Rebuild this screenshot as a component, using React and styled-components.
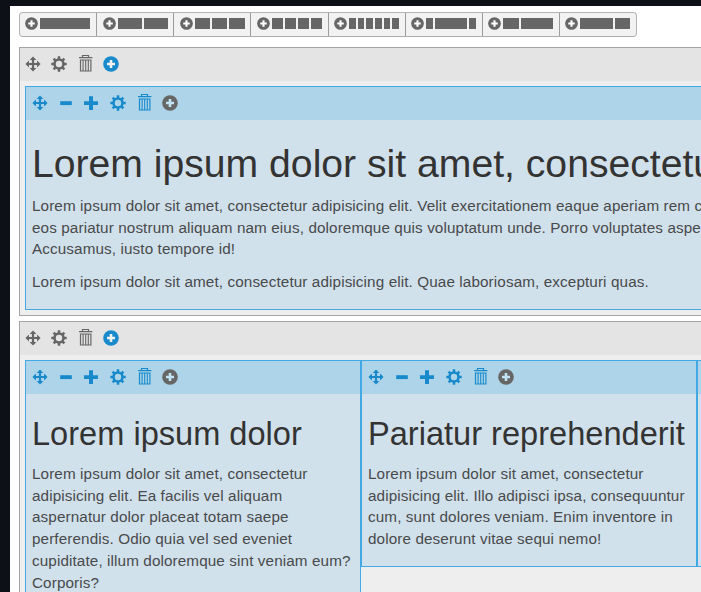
import React from "react";
import styled, { createGlobalStyle } from "styled-components";

const Global = createGlobalStyle`
  * { box-sizing: border-box; }
  html, body { margin: 0; background: #0d1017; }
  body { overflow: hidden; font-family: "Liberation Sans", Arial, sans-serif; color: #484a4c; }
`;

const Frame = styled.div`
  height: 592px;
  overflow: hidden;
  padding: 6px 0 0 10px;
`;

const Page = styled.main`
  height: 586px;
  padding: 6px 0 0 9px;
  background: #fff;
  overflow: hidden;
`;

const Toolbar = styled.div`
  display: flex;
  width: 618px;
  height: 25px;
  margin-bottom: 10px;
  border: 1px solid #b4b4b4;
  border-bottom-color: #adadad;
  border-radius: 4px;
  background: #f2f2f2;
  overflow: hidden;
`;

const LayoutButton = styled.button`
  display: flex;
  align-items: flex-start;
  flex: 1 1 0;
  min-width: 0;
  margin: 0;
  padding: 4px 5px 0 5.4px;
  border: 0;
  border-right: 1px solid #9d9d9d;
  background: transparent;
  &:last-child { border-right: 0; }
`;

const Bars = styled.span`
  display: grid;
  grid-template-columns: ${(p) => p.$columns};
  gap: 2px;
  width: 50px;
  height: 11px;
  margin: 1px 0 0 2px;
`;

const Bar = styled.span`
  background: #666;
`;

const Row = styled.section`
  width: 760px;
  height: ${(p) => p.$height}px;
  margin-bottom: 5px;
  border: 1px solid #a3a3a3;
  background: #eee;
`;

const RowTools = styled.div`
  display: flex;
  align-items: center;
  height: 33px;
  padding: 0 0 2px 5px;
  background: #e4e4e4;
  color: #666;
`;

const Columns = styled.div`
  display: flex;
  align-items: flex-start;
  padding: 5px 0 0 5px;
`;

const Column = styled.article`
  flex: none;
  width: ${(p) => p.$width}px;
  height: ${(p) => p.$height}px;
  border: 1px solid #42a9e4;
  background: #d1e1eb;
  white-space: nowrap;
`;

const ColumnTools = styled.div`
  display: flex;
  align-items: center;
  height: 33px;
  padding: 0 0 2px 5.6px;
  background: #aed4e9;
  color: #188acb;
`;

const Slot = styled.span`
  display: flex;
  flex: none;
  width: ${(p) => p.$width}px;
  color: ${(p) => p.$color || "inherit"};
`;

const Content = styled.div`
  padding: ${(p) => p.$top}px 0 0 6px;
`;

const Title = styled.h1`
  margin: 0 0 ${(p) => p.$gap}px;
  font-size: ${(p) => p.$size}px;
  line-height: 43px;
  font-weight: 400;
  color: #333;
`;

const Text = styled.p`
  margin: 0 0 10.9px;
  font-size: 15.25px;
  letter-spacing: 0.11px;
  line-height: 21.7px;
`;

const Line = styled.span`
  display: block;
  width: max-content;
`;

const Icon = ({ size = 16, children }) => (
  <svg width={size} height={size} viewBox="0 0 16 16" fill="currentColor" overflow="visible">{children}</svg>
);

const Move = () => (
  <Icon>
    <path d="M8 .4 11.4 4H9.1v2.9H12V4.6L15.6 8 12 11.4V9.1H9.1V12h2.3L8 15.6 4.6 12h2.3V9.1H4v2.3L.4 8 4 4.6v2.3h2.9V4H4.6Z" />
  </Icon>
);
const Gear = () => (
  <Icon>
    <g fill="none" stroke="currentColor">
      <circle cx="8" cy="8" r="4.5" strokeWidth="2.6" />
      <path strokeWidth="2.5" d="M8 .3v3M8 12.7v3M.3 8h3M12.7 8h3M2.6 2.6l2 2M11.4 11.4l2 2M2.6 13.4l2-2M11.4 4.6l2-2" />
    </g>
  </Icon>
);
const Trash = () => (
  <Icon>
    <g fill="none" stroke="currentColor">
      <path strokeWidth="1.2" d="M1 1.6h13.4M4.5 1.5V-.5h6v2" />
      <path strokeWidth="1.2" d="M2.5 4h10.4v11H2.5Z" />
      <path strokeWidth="1.1" d="M5.1 4v11M7.7 4v11M10.3 4v11" />
    </g>
  </Icon>
);
const Minus = () => <Icon><path d="M2.2 6.2h11.6v3.9H2.2Z" /></Icon>;
const Plus = () => <Icon><path d="M6 1.2h4v5h5v3.8h-5v5H6v-5H1V6.2h5Z" /></Icon>;
const CirclePlus = ({ size = 16, hole }) => (
  <Icon size={size}>
    <circle cx="8" cy="8" r="7.8" />
    <path fill={hole} d="M6.7 4h2.6v2.7H12v2.6H9.3V12H6.7V9.3H4V6.7h2.7Z" />
  </Icon>
);

const layouts = [
  { columns: "1fr", count: 1 },
  { columns: "1fr 1fr", count: 2 },
  { columns: "repeat(3, 1fr)", count: 3 },
  { columns: "repeat(4, 1fr)", count: 4 },
  { columns: "repeat(6, 1fr)", count: 6 },
  { columns: "6.6px 1fr 6.6px", count: 3 },
  { columns: "15.4px 1fr", count: 2 },
  { columns: "1fr 15.4px", count: 2 },
];

const RowHeader = () => (
  <RowTools>
    <Slot $width={26}><Move /></Slot>
    <Slot $width={27}><Gear /></Slot>
    <Slot $width={25}><Trash /></Slot>
    <Slot $width={16} $color="#188acb"><CirclePlus hole="#f2f2f2" /></Slot>
  </RowTools>
);

const ColumnHeader = () => (
  <ColumnTools>
    <Slot $width={26}><Move /></Slot>
    <Slot $width={25}><Minus /></Slot>
    <Slot $width={27}><Plus /></Slot>
    <Slot $width={27}><Gear /></Slot>
    <Slot $width={25}><Trash /></Slot>
    <Slot $width={16} $color="#666"><CirclePlus hole="#c1e3f3" /></Slot>
  </ColumnTools>
);

const Paragraph = ({ lines }) => (
  <Text>{lines.map((line) => <Line key={line}>{line}</Line>)}</Text>
);

export default function App() {
  return (
    <>
      <Global />
      <Frame>
        <Page>
          <Toolbar>
            {layouts.map(({ columns, count }) => (
              <LayoutButton key={columns} aria-label="Add row">
                <Slot $width={13} $color="#666"><CirclePlus size={13} hole="#fff" /></Slot>
                <Bars $columns={columns}>
                  {Array.from({ length: count }, (_, n) => <Bar key={n} />)}
                </Bars>
              </LayoutButton>
            ))}
          </Toolbar>
          <Row $height={269}>
            <RowHeader />
            <Columns>
              <Column $width={1008} $height={224}>
                <ColumnHeader />
                <Content $top={22}>
                  <Title $size={39.15} $gap={10}>Lorem ipsum dolor sit amet, consectetur</Title>
                  <Paragraph lines={[
                    "Lorem ipsum dolor sit amet, consectetur adipisicing elit. Velit exercitationem eaque aperiam rem corporis",
                    "eos pariatur nostrum aliquam nam eius, doloremque quis voluptatum unde. Porro voluptates aspernatur",
                    "Accusamus, iusto tempore id!",
                  ]} />
                  <Paragraph lines={["Lorem ipsum dolor sit amet, consectetur adipisicing elit. Quae laboriosam, excepturi quas."]} />
                </Content>
              </Column>
            </Columns>
          </Row>
          <Row $height={400}>
            <RowHeader />
            <Columns>
              <Column $width={336} $height={260}>
                <ColumnHeader />
                <Content $top={18}>
                  <Title $size={32.6} $gap={8}>Lorem ipsum dolor</Title>
                  <Paragraph lines={[
                    "Lorem ipsum dolor sit amet, consectetur",
                    "adipisicing elit. Ea facilis vel aliquam",
                    "aspernatur dolor placeat totam saepe",
                    "perferendis. Odio quia vel sed eveniet",
                    "cupiditate, illum doloremque sint veniam eum?",
                    "Corporis?",
                  ]} />
                </Content>
              </Column>
              <Column $width={336} $height={207}>
                <ColumnHeader />
                <Content $top={18}>
                  <Title $size={32.6} $gap={8}>Pariatur reprehenderit</Title>
                  <Paragraph lines={[
                    "Lorem ipsum dolor sit amet, consectetur",
                    "adipisicing elit. Illo adipisci ipsa, consequuntur",
                    "cum, sunt dolores veniam. Enim inventore in",
                    "dolore deserunt vitae sequi nemo!",
                  ]} />
                </Content>
              </Column>
              <Column $width={336} $height={207}><ColumnTools /></Column>
            </Columns>
          </Row>
        </Page>
      </Frame>
    </>
  );
}
